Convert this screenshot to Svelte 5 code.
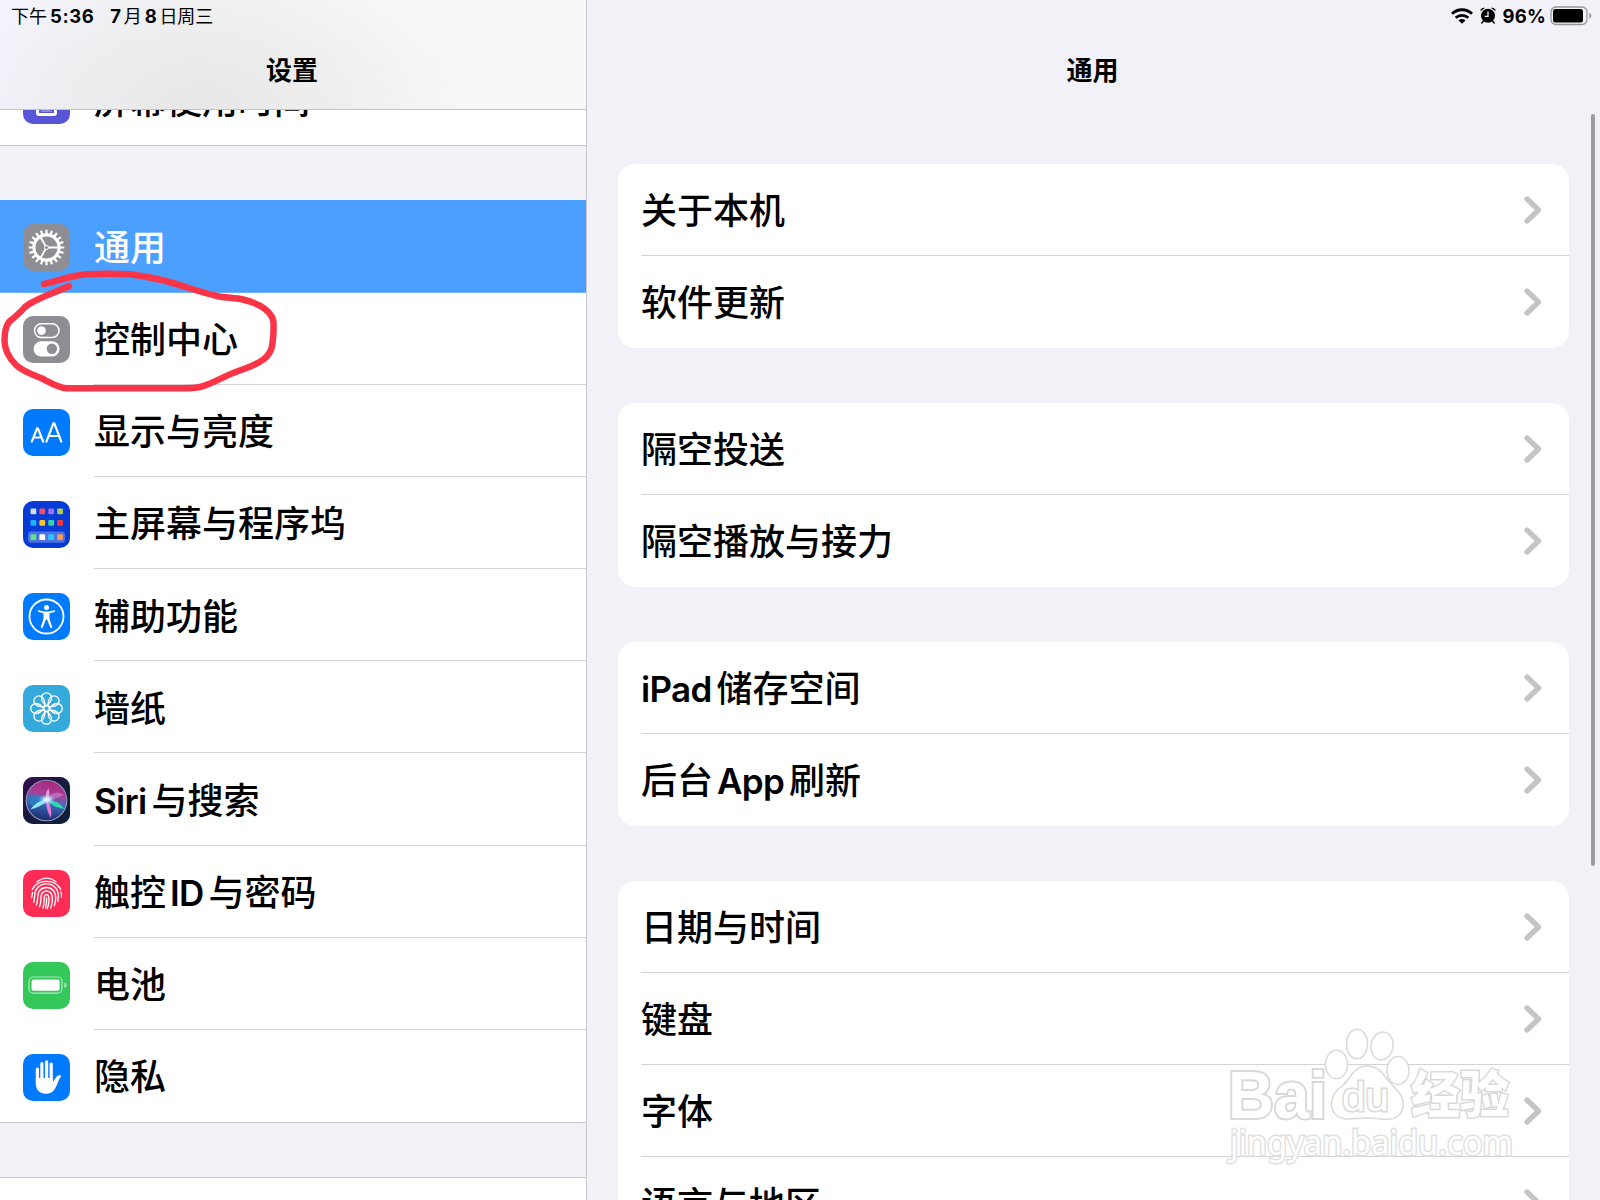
<script lang="ts">
	type Item = {
		icon: string;
		label: string;
	};

	const items: Item[] = [
		{ icon: 'general', label: '通用' },
		{ icon: 'control', label: '控制中心' },
		{ icon: 'display', label: '显示与亮度' },
		{ icon: 'home', label: '主屏幕与程序坞' },
		{ icon: 'access', label: '辅助功能' },
		{ icon: 'wallpaper', label: '墙纸' },
		{ icon: 'siri', label: 'Siri与搜索' },
		{ icon: 'touch', label: '触控ID与密码' },
		{ icon: 'battery', label: '电池' },
		{ icon: 'privacy', label: '隐私' }
	];

	const groups: string[][] = [
		['关于本机', '软件更新'],
		['隔空投送', '隔空播放与接力'],
		['iPad储存空间', '后台App刷新'],
		['日期与时间', '键盘', '字体', '语言与地区']
	];

	const apps = [
		['#d5dbea', '#f0506e', '#a070ff', '#a5cf5a'],
		['#1fb4ff', '#fcc42c', '#35d6a4', '#f63b3b'],
		['#5fe48a', '#ffffff', '#25c8ff', '#f79a52']
	];

	const teeth = Array.from({ length: 20 }, (_, i) => i * 18);
	const petals = Array.from({ length: 8 }, (_, i) => i * 45);

	// latin runs get their own span so they can be spaced from the hanzi
	const split = (label: string) => label.match(/[A-Za-z]+|[^A-Za-z]+/g) ?? [];
	const isLatin = (part: string) => /^[A-Za-z]/.test(part);

	let selected = $state('general');
</script>

{#snippet text(label: string)}
	<span class="label"
		>{#each split(label) as part}<span class:latin={isLatin(part)}>{part}</span>{/each}</span
	>
{/snippet}

{#snippet glyph(icon: string)}
	<svg class="icon {icon}" viewBox="0 0 47 47">
		{#if icon === 'general'}
			<g fill="none" stroke="#fff">
				{#each teeth as a}
					<path d="M23.5 5.7v4.5" stroke-width="2.2" transform="rotate({a} 23.5 23.5)" />
				{/each}
				<circle cx="23.5" cy="23.5" r="12.6" stroke-width="3.2" />
				<circle cx="23.5" cy="23.5" r="2" stroke-width="1" />
				<path d="M25.5 23.5h11M22.5 21.7l-5.5-9.5M22.5 25.3l-5.5 9.5" stroke-width="1.8" />
			</g>
		{:else if icon === 'control'}
			<rect x="11.5" y="7.8" width="24.5" height="13.6" rx="6.8" fill="none" stroke="#fff" stroke-width="1.5" />
			<circle cx="18.5" cy="14.6" r="4.3" fill="#fff" />
			<rect x="10.6" y="25.2" width="26" height="15.2" rx="7.6" fill="#fff" />
			<circle cx="28.9" cy="32.8" r="5.2" fill="#8e8d93" />
		{:else if icon === 'display'}
			<g fill="none" stroke="#fff" stroke-width="2.2" stroke-linecap="round" stroke-linejoin="round">
				<path d="M8.8 32.7l5.3-13.4h.8l5.3 13.4M10.7 28.5h7.6" />
				<path d="M23.4 32.7l7-18.4h.9l7 18.4M25.8 27h10" />
			</g>
		{:else if icon === 'home'}
			<rect x="5" y="30.6" width="37" height="11.2" rx="3" fill="#fff" opacity=".28" />
			{#each apps as row, r}
				{#each row as color, c}
					<rect x={7.5 + c * 8.9} y={[7.5, 19, 33.3][r]} width="5.8" height="5.8" rx="1.2" fill={color} />
				{/each}
			{/each}
		{:else if icon === 'access'}
			<circle cx="23.5" cy="23.5" r="17" fill="none" stroke="#fff" stroke-width="1.8" />
			<circle cx="23.5" cy="14.6" r="2.5" fill="#fff" />
			<path
				d="M15.7 17.3l5.3 1.1h5l5.3-1.1c1-.2 1.3 1.3.2 1.600l-5 1.400v5.200l2.600 8.500c.3 1.200-1.300 1.700-1.800.5l-3.400-8.200h-.8l-3.400 8.200c-.5 1.200-2.100.7-1.800-.5l2.600-8.500v-5.200l-5-1.400c-1.100-.3-.8-1.800.2-1.600z"
				fill="#fff"
			/>
		{:else if icon === 'wallpaper'}
			<g fill="none" stroke="#fff" stroke-width="1.3">
				{#each petals as a}
					<path
						d="M23.5 20.8c-2.600-2-5-4.700-5-8a5 5 0 0 1 10 0c0 3.300-2.400 6-5 8z"
						transform="rotate({a} 23.5 23.5)"
					/>
				{/each}
				<circle cx="23.5" cy="23.5" r="2.900" />
			</g>
		{:else if icon === 'siri'}
			<defs>
				<linearGradient id="siri-bg" x1="0" y1="0" x2="1" y2="1">
					<stop offset="0" stop-color="#3a0c50" />
					<stop offset=".5" stop-color="#171a3c" />
					<stop offset="1" stop-color="#0c2038" />
				</linearGradient>
				<linearGradient id="siri-orb" x1=".6" y1="0" x2=".4" y2="1">
					<stop offset="0" stop-color="#a8267a" />
					<stop offset=".35" stop-color="#a83f96" />
					<stop offset=".55" stop-color="#3c6dbd" />
					<stop offset="1" stop-color="#19286b" />
				</linearGradient>
				<radialGradient id="siri-glow">
					<stop offset="0" stop-color="#fff" />
					<stop offset=".35" stop-color="#d5f2ff" stop-opacity=".85" />
					<stop offset="1" stop-color="#6cc5ff" stop-opacity="0" />
				</radialGradient>
			</defs>
			<rect width="47" height="47" fill="url(#siri-bg)" />
			<circle cx="23.5" cy="23.5" r="20.3" fill="url(#siri-orb)" stroke="#8c9dbb" stroke-width="1.1" />
			<path d="M23.500 23.500C17 16 8 16 4.500 22c2 5 4 7 6 8 3-4 7-6 13-6.500z" fill="#2a86c8" opacity=".65" />
			<path d="M23.500 23.500C27 15 35 14 41 18c-4 1.500-9 4-17.500 5.500z" fill="#c079c5" opacity=".75" />
			<path d="M24 23.500c8 0 14 2.500 17 8.500-6-1-12-3-17-8.500z" fill="#2ee0a9" opacity=".9" />
			<path d="M24.500 22C18 23 11 27 7.500 32.500 14 30.500 20 28 24.500 24z" fill="#8aeafc" />
			<path d="M24 23c-2-4-1.500-8 1.500-11.500 1 4 1 8 0 12z" fill="#e89cdc" />
			<path d="M22.500 23c1 7 2 13 5.500 18 1.200-6-.500-12-3-18z" fill="#e77ad0" />
			<ellipse cx="23.800" cy="22.500" rx="8.500" ry="5.500" fill="url(#siri-glow)" />
		{:else if icon === 'touch'}
			<g fill="none" stroke="#fff" stroke-width="1.35" stroke-linecap="round">
				<path d="M14 11.800c6-4.600 13-4.600 19 0" />
				<path d="M9.300 19.500C14.500 8.600 32.500 8.600 37.700 19.500" />
				<path d="M8.600 27.500c.8-2.200.3-3.600 1-5M38.400 27c.2-2 .2-3.500-.5-5" />
				<path d="M10.500 32.500c2.500-5.500-.8-9.500 3.800-14.500 5-5.500 13.500-5.500 18.400 0 3.200 3.800 3 9 2.100 13.500" />
				<path d="M13.300 35c2.700-6 .2-10.500 3.200-14.300 3.600-4.300 10.400-4.300 14 0 3.300 4.300 2.300 10.500.8 15" />
				<path d="M16.500 36.800c2.600-6.300.4-10.200 2.500-13.600 2.300-3 6.700-3 9 0 2.300 4.100 1.400 9.800-.2 14.800" />
				<path d="M20 38c2.300-6 .2-9.500 1.700-12.400.8-1.300 2.800-1.300 3.600 0 1.600 3.600.5 8.700-1 13" />
				<path d="M23.500 28c.4 3.600-.2 7-1 10" />
			</g>
		{:else if icon === 'battery'}
			<rect x="6" y="15" width="33" height="16.200" rx="4.500" fill="none" stroke="#b5eac3" stroke-width="1.200" />
			<rect x="8.600" y="17.500" width="28" height="11.200" rx="2" fill="#fff" />
			<path d="M41.300 20.500c3 .8 3 4.500 0 5.300z" fill="#b5eac3" />
		{:else if icon === 'privacy'}
			<g fill="none" stroke="#fff" stroke-width="3.200" stroke-linecap="round">
				<path d="M14.400 15v13M18.900 9.500V26M23.600 7.900V26M28.200 10v17" />
			</g>
			<path
				d="M12.800 24h17v4.500c1.700-3 3.300-6 5.500-7 1.500-.7 3 .1 3 .7-2.300 2-3.300 6.800-5.500 11-2.200 4.400-5 6.500-9.800 6.500-6.500 0-10.200-4.300-10.200-10z"
				fill="#fff"
			/>
		{:else if icon === 'time'}
			<path
				d="M15 8h17v4c0 6-5 8-5 11.500S32.500 29 32.500 34v2c0 1-.5 1.500-1.500 1.500H16c-1 0-1.500-.5-1.500-1.500v-2c0-5 5.500-7 5.500-10.500S15 18 15 12z"
				fill="none"
				stroke="#fff"
				stroke-width="3"
			/>
			<path d="M17 35l6.500-5 6.500 5z" fill="#fff" opacity=".3" />
		{/if}
	</svg>
{/snippet}

<div class="screen">
	<aside>
		<header class="side-head">
			<div class="clock">
				<span>下午<b class="time">5:36</b></span>
				<span><b>7</b>月<b>8</b>日周三</span>
			</div>
			<h1>设置</h1>
		</header>
		<div class="list">
			<section class="prev">
				<div class="item">
					{@render glyph('time')}
					<div class="cell">{@render text('屏幕使用时间')}</div>
				</div>
			</section>
			<section>
				{#each items as item (item.icon)}
					<button class="item" class:selected={selected === item.icon} onclick={() => (selected = item.icon)}>
						{@render glyph(item.icon)}
						<div class="cell">{@render text(item.label)}</div>
					</button>
				{/each}
			</section>
			<section class="next"></section>
		</div>
	</aside>

	<main>
		<header class="main-head">
			<div class="status">
				<svg class="wifi" width="22" height="16" viewBox="0 0 22 16">
					<g fill="none" stroke="#000" stroke-width="2.800">
						<path d="M1 5.700c5.700-5.300 14.300-5.300 20 0" />
						<path d="M4.700 9.800c3.600-3.300 9-3.300 12.600 0" />
					</g>
					<path d="M7.500 12.400c2-1.800 5-1.800 7 0L11 15.800z" />
				</svg>
				<svg class="alarm" width="16" height="17" viewBox="0 0 16 17">
					<circle cx="8" cy="8.800" r="7" />
					<path d="M.3 4.300C.3 1.500 3 0 5 1.100zM15.700 4.300C15.700 1.500 13 0 11 1.100z" />
					<path d="M3.500 14l-1.700 2M12.500 14l1.700 2" stroke="#000" stroke-width="1.500" stroke-linecap="round" />
					<path d="M8 4.500V9.300H4.600" fill="none" stroke="#f2f1f7" stroke-width="1.300" />
				</svg>
				<b>96%</b>
				<svg class="power" width="42" height="20" viewBox="0 0 42 20">
					<rect x="1" y="1" width="36" height="17.500" rx="5" fill="none" stroke="#98979c" stroke-width="1.300" />
					<rect x="3" y="3" width="30" height="13.500" rx="2.500" />
					<path d="M39.300 6.700c2.700 1 2.700 5 0 6z" fill="#98979c" />
				</svg>
			</div>
			<h1>通用</h1>
		</header>
		<div class="groups">
			{#each groups as group}
				<div class="card">
					{#each group as label}
						<div class="row">
							{@render text(label)}
							<svg class="chevron" width="18" height="28" viewBox="0 0 18 28">
								<path d="M3 3l11.500 11L3 25" />
							</svg>
						</div>
					{/each}
				</div>
			{/each}
		</div>
		<div class="scrollbar"></div>
	</main>

	<svg class="marker" width="290" height="130" viewBox="0 265 290 130">
		<path
			d="M44 284C58 281 72 275 87 274.200C101 273.500 117 273.500 130 274.300C143 276 154 278 166 281C184 286 199 292 217 296C226 298 235 297.500 243 299.500C253 302 260 305 265 309C270 313 273.500 317 273.500 323C273.700 330 273.500 337 272.500 343C272 350 269 355 264 359C255 366 246 368 237 371.500C224 376 212 384 200 387C192 389 180 388 170 388.300H67C58 388 49 382 41 378C33 375 22 371 16 365C9 358 4.800 350 4.500 341C4.500 333 5 327 9 322C15 317 20 313 25 307C34 299 57 292 69 286"
		/>
	</svg>

	<svg class="watermark" width="300" height="150" viewBox="1220 1020 300 150">
		<g class="paw">
			<ellipse cx="1336.500" cy="1064.500" rx="11" ry="14.300" />
			<ellipse cx="1357" cy="1044" rx="10.500" ry="14.800" />
			<ellipse cx="1382" cy="1046" rx="11" ry="14" transform="rotate(10 1382 1046)" />
			<ellipse cx="1398" cy="1070.500" rx="11" ry="14" />
			<path
				d="M1367 1066c-14 0-17 14-25 20-13 9-12 22-7 28 8 8 18 4 32 4s23 4 31-2c8-7 6-19-1-26-12-11-15-24-30-24z"
			/>
		</g>
		<text class="bai" x="1228" y="1117.500" textLength="99" lengthAdjust="spacingAndGlyphs">Bai</text>
		<text class="du" x="1342" y="1110.500" textLength="47" lengthAdjust="spacingAndGlyphs">du</text>
		<text class="exp" x="1411" y="1113" textLength="98" lengthAdjust="spacingAndGlyphs">经验</text>
		<text class="url" x="1230" y="1155" textLength="283" lengthAdjust="spacingAndGlyphs">jingyan.baidu.com</text>
	</svg>
</div>

<style>
	:global(body) {
		overflow: hidden;
	}

	.screen {
		position: relative;
		display: flex;
		width: 1600px;
		height: 1200px;
		overflow: hidden;
		background: #f2f1f7;
		color: #000;
		font-family: Inter, 'Noto Sans CJK SC', sans-serif;
	}

	aside {
		display: flex;
		flex-direction: column;
		box-sizing: border-box;
		width: 587px;
		border-right: 1px solid #c8c7cc;
	}

	.side-head {
		box-sizing: border-box;
		height: 110px;
		flex: none;
		border-bottom: 1px solid #c3c3c5;
		background:
			radial-gradient(ellipse 260px 130px at 205px 105px, rgba(228, 228, 228, 0.75), rgba(240, 240, 240, 0)),
			linear-gradient(90deg, #f4f3fc 0%, #f3f2f8 10%, #f2f2f3 35%, #f6f6f6 70%, #f8f8f8 100%);
	}

	.clock {
		display: flex;
		gap: 16px;
		height: 31px;
		padding-left: 11px;
		line-height: 32px;
		font-size: 18px;
		font-weight: 400;
		text-autospace: no-autospace;
	}

	.clock b,
	.status b {
		font-weight: 650;
		font-size: 18.500px;
	}

	.clock b {
		margin: 0 2px 0 3px;
		letter-spacing: 0.6px;
	}

	.clock span + span b:first-child {
		margin-left: 0;
	}

	.clock .time {
		margin-right: 0;
	}

	h1 {
		margin: 0;
		height: 78px;
		padding-right: 2px;
		line-height: 80px;
		text-align: center;
		font-size: 26px;
		font-weight: 700;
	}

	.list {
		flex: 1;
		overflow: hidden;
	}

	section {
		background: #fff;
		border-bottom: 1px solid #c8c7cc;
	}

	.prev {
		margin-top: -57px;
		margin-bottom: 54px;
	}

	.next {
		height: 60px;
		margin-top: 54px;
		border-top: 1px solid #c8c7cc;
	}

	.item {
		display: flex;
		align-items: center;
		box-sizing: border-box;
		width: 100%;
		height: 92.2px;
		padding: 0 0 0 23px;
		border: 0;
		background: none;
		color: inherit;
		font: inherit;
		text-align: left;
	}

	.item.selected {
		background: #4ba0ff;
		box-shadow: 0 0.800px #4ba0ff;
		color: #fff;
	}

	.cell {
		display: flex;
		align-items: center;
		box-sizing: border-box;
		flex: 1;
		height: 100%;
		margin-left: 24px;
		border-bottom: 1px solid #d3d3d6;
	}

	.item:last-child .cell,
	.item.selected .cell {
		border-color: transparent;
	}

	.icon {
		flex: none;
		width: 47px;
		height: 47px;
		margin-top: 3px;
		border-radius: 10px;
		background: #007aff;
	}

	.icon.general,
	.icon.control {
		background: #8e8d93;
	}

	.icon.home {
		background: #073bd5;
	}

	.icon.wallpaper {
		background: #34aadc;
	}

	.icon.touch {
		background: #ff2d55;
	}

	.icon.battery {
		background: #34c759;
	}

	.icon.time {
		background: #5856d6;
	}

	.label {
		padding-top: 4px;
		white-space: nowrap;
		font-size: 36px;
		line-height: 50px;
		font-weight: 500;
		text-autospace: no-autospace;
	}

	.latin {
		margin: 0 5px 0 4px;
		font-size: 35px;
		font-weight: 600;
		letter-spacing: -0.7px;
	}

	.latin:first-child {
		margin-left: 0;
	}

	main {
		position: relative;
		flex: 1;
		overflow: hidden;
	}

	.main-head {
		height: 110px;
	}

	.status {
		display: flex;
		align-items: center;
		justify-content: flex-end;
		height: 31px;
		padding-right: 8px;
	}

	.status b {
		letter-spacing: 0.2px;
	}

	.alarm {
		margin: 0 7px;
	}

	.power {
		margin-left: 4px;
	}

	.groups {
		display: flex;
		flex-direction: column;
		gap: 54.600px;
		padding: 54px 31.500px 0 31px;
	}

	.card {
		padding-left: 23px;
		border-radius: 17px;
		background: #fff;
	}

	.row {
		display: flex;
		align-items: center;
		justify-content: space-between;
		box-sizing: border-box;
		height: 92.2px;
		padding-right: 26.500px;
		border-bottom: 1px solid #d3d3d6;
	}

	.row:last-child {
		border-color: transparent;
	}

	.row .label {
		padding-top: 3px;
	}

	.chevron path {
		fill: none;
		stroke: #c4c4c7;
		stroke-width: 5.300;
		stroke-linecap: round;
		stroke-linejoin: round;
	}

	.scrollbar {
		position: absolute;
		top: 114px;
		right: 5px;
		width: 4.500px;
		height: 752px;
		border-radius: 3px;
		background: #9b9a9f;
	}

	.marker {
		position: absolute;
		top: 265px;
		left: 0;
		pointer-events: none;
	}

	.marker path {
		fill: none;
		stroke: #fb3547;
		stroke-width: 6.500;
		stroke-linecap: round;
		stroke-linejoin: round;
	}

	.watermark {
		position: absolute;
		top: 1020px;
		left: 1220px;
		pointer-events: none;
		fill: #fff;
		stroke: #d9d9d9;
		stroke-width: 1.500;
	}

	.watermark text {
		paint-order: stroke;
		stroke-width: 3;
	}

	.watermark .bai {
		font: 700 66px 'Liberation Sans', sans-serif;
		stroke-width: 4;
	}

	.du {
		font: 400 40px 'Liberation Sans', sans-serif;
	}

	.exp {
		font: 900 50px 'Noto Sans CJK SC', sans-serif;
	}

	.url {
		font: 400 34px 'Noto Sans', sans-serif;
		stroke: #e0e0e0;
	}
</style>
